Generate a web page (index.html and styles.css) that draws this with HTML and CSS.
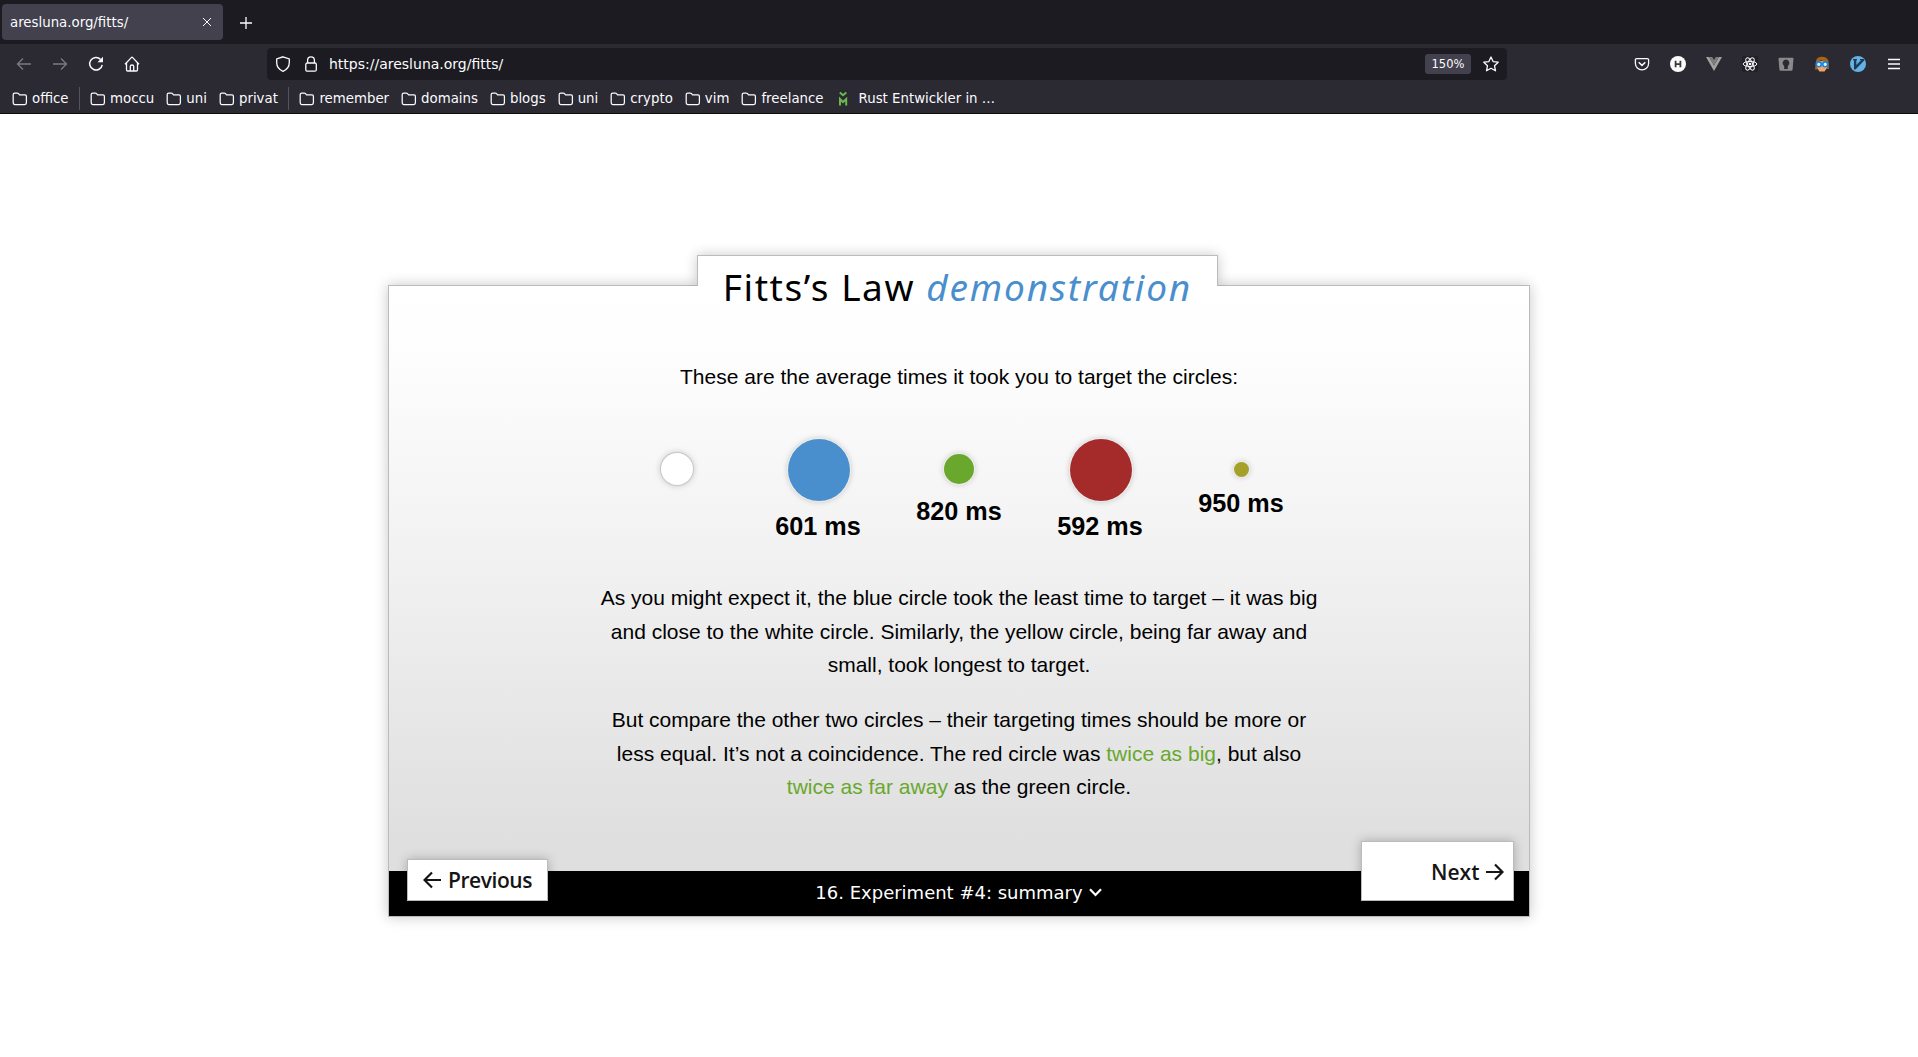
FILE: index.html
```html
<!DOCTYPE html>
<html lang="en">
<head>
<meta charset="utf-8">
<title>aresluna.org/fitts/</title>
<link rel="stylesheet" href="styles.css">
</head>
<body>
<svg width="0" height="0" class="defs" aria-hidden="true">
  <symbol id="folder" viewBox="0 0 16 16"><path d="M1.2 11.8V3.6Q1.2 2 2.8 2H5.2Q6 2 6.5 2.6L7.6 3.9H13Q14.4 3.9 14.4 5.3V11.8Q14.4 13.5 12.8 13.5H2.8Q1.2 13.5 1.2 11.8Z" fill="none" stroke="#fbfbfe" stroke-width="1.25"/></symbol>
</svg>
<header class="browser">
  <div class="tabs">
    <div class="tab"><span>aresluna.org/fitts/</span>
      <svg width="10" height="10" viewBox="0 0 10 10" stroke="#fbfbfe" stroke-width="1"><path d="M1 1L9 9M9 1L1 9"/></svg>
    </div>
    <svg class="plus" width="12" height="12" viewBox="0 0 12 12" stroke="#fbfbfe" stroke-width="1.3"><path d="M6 0V12M0 6H12"/></svg>
  </div>
  <div class="toolbar">
    <div class="nav">
      <svg class="dim" width="16" height="16" viewBox="0 0 16 16"><path d="M15 8H1.5M7 2.5L1.5 8L7 13.5"/></svg>
      <svg class="dim" width="16" height="16" viewBox="0 0 16 16"><path d="M1 8H14.5M9 2.5L14.5 8L9 13.5"/></svg>
      <svg width="16" height="16" viewBox="0 0 16 16"><path d="M12.6 3.4A6.3 6.3 0 1 0 14.2 8.8" stroke-width="1.5"/><path d="M15 .8V6.3H9.5Z" fill="#fbfbfe" stroke="none"/></svg>
      <svg class="home" width="16" height="16" viewBox="0 0 16 16"><path d="M1 8.2L7.3 1.6Q8 .9 8.7 1.6L15 8.2M2.5 7V13.8Q2.5 15 3.7 15H12.3Q13.5 15 13.5 13.8V7M6.3 15V10.3Q6.3 9 8 9Q9.7 9 9.7 10.3V15"/></svg>
    </div>
    <div class="url">
      <svg width="16" height="16" viewBox="0 0 16 16"><path d="M8 .8L14.3 3V6.5C14.3 11 11.2 14 8 15.3C4.8 14 1.7 11 1.7 6.5V3Z"/></svg>
      <svg class="lock" width="16" height="16" viewBox="0 0 16 16"><rect x="2.8" y="7" width="10.5" height="8.2" rx="1.5"/><path d="M4.6 7V4.2A3.4 3.4 0 0 1 11.4 4.2V7"/></svg>
      <span class="address">https://aresluna.org/fitts/</span>
      <span class="zoom">150%</span>
      <svg width="16" height="16" viewBox="0 0 16 16"><path d="M8 1L10.1 5.6L15.2 6.2L11.5 9.7L12.5 14.8L8 12.3L3.5 14.8L4.5 9.7L.8 6.2L5.9 5.6Z" stroke-linejoin="round"/></svg>
    </div>
    <div class="extensions">
      <svg width="16" height="16" viewBox="0 0 16 16"><path d="M2.6 2.6H13.4Q14.6 2.6 14.6 3.8V7.4C14.6 11 11.6 13.8 8 13.8S1.4 11 1.4 7.4V3.8Q1.4 2.6 2.6 2.6Z" stroke-width="1.3"/><path d="M4.7 6.2L8 9.4L11.3 6.2" stroke-width="1.5"/></svg>
      <svg width="16" height="16" viewBox="0 0 16 16"><circle cx="8" cy="8" r="8" fill="#fbfbfe" stroke="none"/><path d="M5.6 4.8V11.2M10.4 4.8V11.2M5.6 8.2H10.4" stroke="#38383d" stroke-width="1.8"/></svg>
      <svg width="16" height="16" viewBox="0 0 16 16"><path d="M0 1H3.2L8 9.4L12.8 1H16L8 15Z" fill="#a2a2a2" stroke="none"/><path d="M3.2 1H6.2L8 4L9.8 1H12.8L8 9.4Z" fill="#7d7d80" stroke="none"/></svg>
      <svg width="16" height="16" viewBox="0 0 16 16"><path d="M0 0H16V16H0Z" fill="#222226" stroke="none"/><g stroke-width="1"><ellipse cx="8" cy="8" rx="6.8" ry="2.6"/><ellipse cx="8" cy="8" rx="6.8" ry="2.6" transform="rotate(60 8 8)"/><ellipse cx="8" cy="8" rx="6.8" ry="2.6" transform="rotate(120 8 8)"/></g><circle cx="8" cy="8" r="1.3" fill="#fbfbfe" stroke="none"/></svg>
      <svg width="16" height="16" viewBox="0 0 16 16"><path d="M.5 2.6Q.5 1.7 1.5 1.7H14.5Q15.5 1.7 15.5 2.6L14.6 13.4Q14.5 14.7 13.2 14.7H2.8Q1.5 14.7 1.4 13.4Z" fill="#8a8a8a" stroke="none"/><path d="M8 3.6A3.6 3.6 0 0 1 9.8 10.2V13H6.2V10.2A3.6 3.6 0 0 1 8 3.6Z" fill="#2b2a33" stroke="none"/></svg>
      <svg width="16" height="16" viewBox="0 0 16 16"><path d="M3 5H13V12L10.5 15.5H5.5L3 12Z" fill="#f2a26d" stroke="none"/><path d="M1 13.5L2 5Q3 .8 8 .8Q13 .8 14.5 5L15 13H13V6.5Q9 5.5 7 4Q5 6 3.2 6.5V13.5Z" fill="#a8650f" stroke="none"/><circle cx="4.8" cy="8.3" r="2.4" fill="#e4f4ff" stroke="#1686e8" stroke-width="1.6"/><circle cx="11.2" cy="8.3" r="2.4" fill="#e4f4ff" stroke="#1686e8" stroke-width="1.6"/></svg>
      <svg width="16" height="16" viewBox="0 0 16 16"><circle cx="8" cy="8" r="8" fill="#63b2e6" stroke="none"/><path d="M3 3H7V4.2H6.3V9L11 4.2H10V3H14.2V4.4L5.5 13.5H4V4.2H3Z" fill="#203b50" stroke="none"/></svg>
      <svg width="16" height="16" viewBox="0 0 16 16"><path d="M2 3.5H14M2 8H14M2 12.5H14" stroke-width="1.4"/></svg>
    </div>
  </div>
  <nav class="bookmarks">
    <a><svg><use href="#folder"/></svg>office</a><i></i>
    <a><svg><use href="#folder"/></svg>moccu</a>
    <a><svg><use href="#folder"/></svg>uni</a>
    <a><svg><use href="#folder"/></svg>privat</a><i></i>
    <a><svg><use href="#folder"/></svg>remember</a>
    <a><svg><use href="#folder"/></svg>domains</a>
    <a><svg><use href="#folder"/></svg>blogs</a>
    <a><svg><use href="#folder"/></svg>uni</a>
    <a><svg><use href="#folder"/></svg>crypto</a>
    <a><svg><use href="#folder"/></svg>vim</a>
    <a><svg><use href="#folder"/></svg>freelance</a>
    <a class="site"><svg viewBox="0 0 16 16"><path d="M.8 1.5L4 4.3L7.3 1.5M1 14.5V8L4 11L7.2 8V14.5" fill="none" stroke="#6cb84f" stroke-width="2"/></svg>Rust Entwickler in …</a>
  </nav>
</header>
<main>
  <section class="card">
    <h1>Fitts’s Law <em>demonstration</em></h1>
    <p class="intro">These are the average times it took you to target the circles:</p>
    <div class="results">
      <div class="result"><div class="slot"><b class="dot white"></b></div></div>
      <div class="result"><div class="slot"><b class="dot blue"></b></div><strong>601 ms</strong></div>
      <div class="result mid"><div class="slot"><b class="dot green"></b></div><strong>820 ms</strong></div>
      <div class="result"><div class="slot"><b class="dot red"></b></div><strong>592 ms</strong></div>
      <div class="result small"><div class="slot"><b class="dot yellow"></b></div><strong>950 ms</strong></div>
    </div>
    <p class="first">As you might expect it, the blue circle took the least time to target – it was big<br>and close to the white circle. Similarly, the yellow circle, being far away and<br>small, took longest to target.</p>
    <p class="second">But compare the other two circles – their targeting times should be more or<br>less equal. It’s not a coincidence. The red circle was <mark>twice as big</mark>, but also<br><mark>twice as far away</mark> as the green circle.</p>
    <footer>
      <button class="prev"><svg width="18" height="18" viewBox="0 0 18 18"><path d="M18 9H1.5M9 1.5L1.5 9L9 16.5"/></svg><span>Previous</span></button>
      <div class="chapter"><span>16. Experiment #4: summary</span><svg width="13" height="9" viewBox="0 0 13 9"><path d="M1 1.2L6.5 7L12 1.2" fill="none" stroke="#fff" stroke-width="2.2"/></svg></div>
      <button class="next"><span>Next</span><svg width="18" height="18" viewBox="0 0 18 18"><path d="M0 9H16.5M9 1.5L16.5 9L9 16.5"/></svg></button>
    </footer>
  </section>
</main>
</body>
</html>
```
FILE: styles.css
```css
* { box-sizing: border-box; }
body { margin: 0; height: 1057px; overflow: hidden; background: #fff; font-family: "Liberation Sans", Arial, sans-serif; }
.defs { position: absolute; }
.browser { height: 114px; background: #2b2a33; border-bottom: 1px solid #0c0c0d; color: #fbfbfe; font: 13.33px "DejaVu Sans", sans-serif; }
.tabs { height: 44px; background: #1c1b22; padding: 4px 2px; display: flex; align-items: center; gap: 17px; }
.tab { width: 221px; height: 36px; border-radius: 4px; background: #42414d; padding: 0 11px 0 8px; display: flex; align-items: center; justify-content: space-between; }
.plus { margin-top: 1px; }
.toolbar { height: 40px; display: flex; align-items: center; }
.toolbar svg { flex: none; fill: none; stroke: #fbfbfe; stroke-width: 1.3; }
.nav { width: 267px; padding-left: 16px; display: flex; gap: 20px; }
.nav .home { margin-left: -.5px; }
.toolbar .dim { stroke: #7b7a82; }
.url { width: 1240px; height: 32px; border-radius: 4px; background: #1c1b22; padding: 0 8px; display: flex; align-items: center; }
.lock { margin-left: 12px; }
.address { flex: 1; margin-left: 10px; padding-bottom: 1px; font-size: 14px; }
.zoom { width: 46px; height: 20px; margin-right: 12px; border-radius: 3px; background: #42414d; font-size: 11.5px; line-height: 20px; text-align: center; }
.extensions { margin-left: 127px; display: flex; gap: 20px; }
.bookmarks { height: 29px; padding-left: 12px; display: flex; align-items: center; }
.bookmarks a { display: flex; align-items: center; gap: 4px; margin-right: 12px; white-space: nowrap; }
.bookmarks svg { width: 16px; height: 16px; }
.bookmarks i { width: 1px; height: 23px; margin: 0 10.5px 0 -2px; background: #55545e; }
.bookmarks .site { margin-left: 3px; }
main { padding-top: 171px; }
.card { position: relative; width: 1142px; height: 632px; margin-left: 388px; border: 1px solid #bbb; background: linear-gradient(#fff 0%, #fdfdfd 12%, #f2f2f2 42%, #dfdfdf 88%); box-shadow: 0 0 13px rgba(0,0,0,.22); text-align: center; font-size: 21px; line-height: 33.6px; }
h1 { position: absolute; left: 308px; top: -31px; width: 521px; height: 31px; margin: 0; isolation: isolate; font: 37px/64px "Noto Sans", sans-serif; letter-spacing: 1.55px; white-space: nowrap; }
h1::before { content: ""; position: absolute; z-index: -1; inset: 0; border: 1px solid #bbb; border-bottom: 0; background: #fff; box-shadow: 0 0 13px rgba(0,0,0,.22); clip-path: inset(-16px -16px 0 -16px); }
h1 em { color: #4a8fcd; letter-spacing: 1.85px; }
p { margin: 0; }
.intro { padding-top: 74px; }
.results { height: 157.4px; margin: 30px 0 0 217.5px; display: flex; }
.result { width: 141px; text-align: center; }
.slot { height: 92px; display: flex; align-items: center; justify-content: center; }
.result strong { display: block; margin-top: -6px; font-size: 25.2px; }
.mid strong { margin-top: -21px; }
.small strong { margin-top: -29px; }
.dot { width: 62px; height: 62px; border-radius: 50%; box-shadow: 0 0 0 1px #eee, 0 0 6px rgba(0,0,0,.25); }
.white { width: 32px; height: 32px; margin-bottom: 1px; background: #fff; box-shadow: 0 0 0 1px #c8c8c8, 0 0 7px rgba(0,0,0,.25); }
.blue, .red { margin-left: 1px; }
.blue { background: #4a8fcd; }
.green { width: 30px; height: 30px; margin-bottom: 1px; background: #69a82c; }
.red { background: #a52a2a; }
.yellow { width: 15px; height: 15px; margin-bottom: 1px; background: #a5a02a; }
.second { margin-top: 21.4px; }
mark { background: none; color: #69a82c; }
footer { position: absolute; left: 0; right: 0; bottom: 0; height: 45px; background: #000; display: flex; justify-content: space-between; align-items: flex-end; padding: 0 15px 15px 18px; color: #fff; }
button { border: 1px solid #bbb; background: #fff; box-shadow: 0 0 10px rgba(0,0,0,.25); padding: 0; display: flex; align-items: center; font: 600 21px "Open Sans", sans-serif; color: #151515; gap: 7px; }
button svg { fill: none; stroke: #151515; stroke-width: 2.2; }
.prev { width: 141px; height: 42px; padding-left: 15px; letter-spacing: -.45px; }
.next { width: 153px; height: 60px; padding: 2px 8.5px 0 0; justify-content: flex-end; }
.chapter { display: flex; align-items: center; gap: 6px; height: 17px; padding-left: 8px; font: 18px "DejaVu Sans", sans-serif; }
```
